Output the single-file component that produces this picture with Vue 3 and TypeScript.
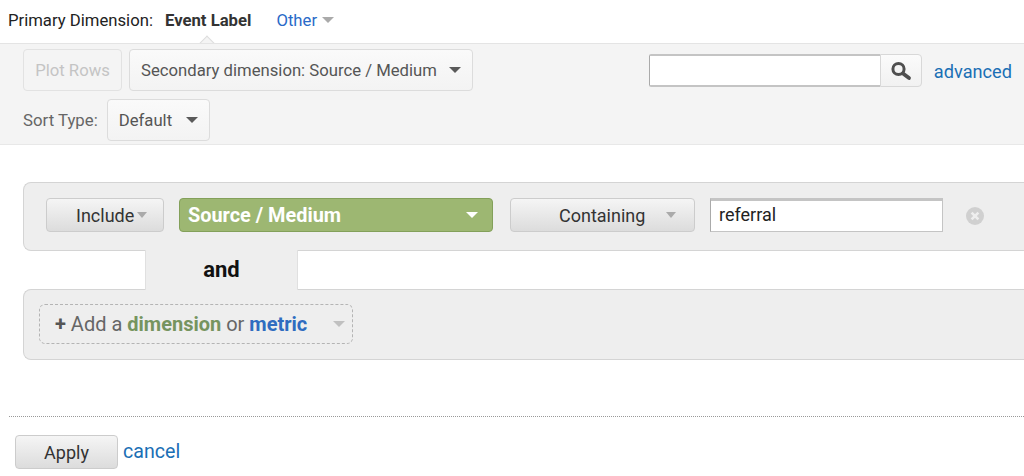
<script setup lang="ts">
const secondary = 'Secondary dimension: Source / Medium'
</script>

<template>
  <div class="page">
    <div class="primary">
      <span class="label">Primary Dimension:</span>
      <b class="current">Event Label<i class="notch"></i></b>
      <span class="other">Other</span>
      <i class="caret grey"></i>
    </div>
    <div class="toolbar">
      <div class="row r1">
        <button class="tbtn plot">Plot Rows</button>
        <button class="tbtn second"><span>{{ secondary }}</span><i class="caret dark"></i></button>
        <div class="search">
          <div class="sinput"></div>
          <div class="sbtn">
            <svg width="22" height="20" viewBox="0 0 22 20">
              <circle cx="8.5" cy="8" r="5.6" fill="#f4f4f4" stroke="#4f4f4f" stroke-width="3" />
              <path d="M13 12.5l6 4.5" stroke="#4f4f4f" stroke-width="3.8" stroke-linecap="round" fill="none" />
            </svg>
          </div>
        </div>
        <a class="link advanced">advanced</a>
      </div>
      <div class="row r2">
        <span class="sort">Sort Type:</span>
        <button class="tbtn def"><span>Default</span><i class="caret dark"></i></button>
      </div>
    </div>
    <div class="filters">
      <div class="box b1">
        <div class="gbtn include"><span>Include</span><i class="caret grey"></i></div>
        <div class="green"><span>Source / Medium</span><i class="caret white"></i></div>
        <div class="gbtn containing"><span>Containing</span><i class="caret grey"></i></div>
        <div class="value">referral</div>
        <svg class="close" width="18" height="18" viewBox="0 0 18 18">
          <circle cx="9" cy="9" r="9" fill="#d0d0d0" />
          <path d="M5.6 5.6l6.8 6.8M12.4 5.6l-6.8 6.8" stroke="#eee" stroke-width="2.6" />
        </svg>
      </div>
      <div class="joinrow">
        <div class="join">and</div>
        <div class="joinrest"></div>
      </div>
      <div class="box b2">
        <div class="add">
          <span class="addtext"><b class="plus">+</b> Add a <b class="dim">dimension</b> or <b class="met">metric</b></span>
          <i class="caret lgrey"></i>
        </div>
      </div>
    </div>
    <div class="sep"></div>
    <div class="actions">
      <div class="gbtn apply">Apply</div>
      <a class="link cancel">cancel</a>
    </div>
  </div>
</template>

<style>
html, body { margin: 0; background: #fff; overflow: hidden; }
</style>

<style scoped>
.page { width: 1024px; height: 476px; font-family: Roboto, "Liberation Sans", sans-serif; color: #333; overflow: hidden; }
.primary { height: 43px; display: flex; align-items: center; padding: 0 0 3px 8px; box-sizing: border-box; font-size: 16.7px; color: #222; }
.label { margin-right: 12px; }
.current { position: relative; font-weight: 700; color: #333; margin-right: 25px; }
.notch { position: absolute; left: 36px; top: 27px; width: 11px; height: 11px; background: #f4f4f4; border-left: 1px solid #ddd; border-top: 1px solid #ddd; transform: rotate(45deg); }
.other { color: #2a6ac8; margin-right: 5px; }
.caret { display: inline-block; width: 0; height: 0; border-left: 6px solid transparent; border-right: 6px solid transparent; border-top: 6px solid #555; }
.caret.grey { border-top-color: #aaa; }
.caret.lgrey { border-top-color: #c0c0c0; }
.caret.dark { border-top-color: #5a5a5a; }
.caret.white { border-top-color: #fff; }
.toolbar { height: 102px; box-sizing: border-box; background: #f4f4f4; border-top: 1px solid #e4e4e4; border-bottom: 1px solid #e8e8e8; padding: 5px 12px 0 23px; position: relative; }
.row { display: flex; align-items: center; }
.r1 { height: 42px; }
.r2 { height: 42px; margin-top: 8px; }
.tbtn { height: 42px; box-sizing: border-box; border: 1px solid #dcdcdc; border-radius: 4px; background: linear-gradient(#fafafa, #f3f3f3); font: inherit; font-size: 16.7px; color: #555; display: flex; align-items: center; justify-content: space-between; padding: 0 11px; }
.plot { width: 99px; color: #c4c4c4; background: #f4f4f4; border-color: #e2e2e2; justify-content: center; padding: 0; margin-right: 7px; }
.second { width: 344px; }
.search { display: flex; margin-left: auto; height: 33px; margin-top: 1px; }
.sinput { width: 231px; box-sizing: border-box; background: #fff; border: 1px solid #c4c4c4; border-top-width: 2px; border-right: none; border-radius: 2px 0 0 2px; border-bottom-width: 2px; border-left-color: #aaa; }
.sbtn { width: 42px; box-sizing: border-box; border: 1px solid #d8d8d8; border-radius: 0 4px 4px 0; background: linear-gradient(#fbfbfb, #f1f1f1); display: flex; align-items: center; justify-content: center; padding-left: 1px; }
.link { color: #1a6fb5; font-size: 18.2px; }
.advanced { margin-left: 12px; margin-top: 2px; }
.sort { font-size: 16.8px; color: #666; margin-right: 9px; }
.def { width: 103px; }
.filters { padding: 37px 0 0 23px; }
.box { box-sizing: border-box; background: #eee; border: 1px solid #d4d4d4; border-right: none; border-radius: 8px 0 0 8px; display: flex; }
.b1 { height: 69px; align-items: flex-start; padding: 15px 0 0 22px; position: relative; z-index: 1; }
.gbtn { height: 34px; box-sizing: border-box; border: 1px solid #ccc; border-radius: 4px; background: linear-gradient(#f5f5f5, #dcdcdc); font-size: 18px; color: #333; display: flex; align-items: center; }
.include { width: 118px; padding-left: 29px; }
.include .caret { margin-left: 3px; border-left-width: 5.5px; border-right-width: 5.5px; }
.green { width: 314px; height: 34px; margin-left: 15px; box-sizing: border-box; background-color: #9db772; background-image: radial-gradient(#a4bc7b 0.5px, transparent 0.7px); background-size: 4px 4px; border: 1px solid #83a05a; border-radius: 4px; color: #fff; font-weight: 700; font-size: 19.9px; display: flex; align-items: center; justify-content: space-between; padding: 0 14px 0 8px; }
.containing { width: 185px; margin-left: 17px; padding-left: 48px; justify-content: space-between; padding-right: 18px; }
.containing .caret { border-left-width: 5.5px; border-right-width: 5.5px; }
.value { width: 233px; height: 34px; margin-left: 15px; box-sizing: border-box; background: #fff; border: 1px solid #c4c4c4; border-top: 3px solid #c4c4c4; border-left-color: #aaa; padding-left: 8px; font-size: 18px; color: #222; line-height: 28px; }
.close { margin: 9px 0 0 23px; }
.joinrow { display: flex; height: 40px; margin-top: -1px; }
.join { width: 153px; margin-left: 122px; box-sizing: border-box; background: #eee; border-left: 1px solid #e0e0e0; border-right: 1px solid #e0e0e0; text-align: center; font-weight: 700; font-size: 22px; color: #111; line-height: 40px; position: relative; z-index: 2; }
.joinrest { flex: 1; }
.b2 { height: 71px; margin-top: -1px; padding: 14px 0 0 15px; align-items: flex-start; position: relative; z-index: 1; }
.add { width: 314px; height: 40px; box-sizing: border-box; border: 1px dashed #b4b4b4; border-radius: 6px; display: flex; align-items: center; justify-content: space-between; padding: 0 7px 0 15px; font-size: 20px; color: #666; }
.plus { color: #555; }
.dim { color: #76945f; font-weight: 700; }
.met { color: #2f6cc0; font-weight: 700; }
.sep { margin: 56px 0 0 9px; border-top: 1px dotted #999; }
.actions { display: flex; align-items: flex-start; padding: 18px 0 0 15px; }
.apply { width: 103px; justify-content: center; color: #333; }
.cancel { margin-left: 5px; line-height: 33px; font-size: 19.6px; }
</style>
